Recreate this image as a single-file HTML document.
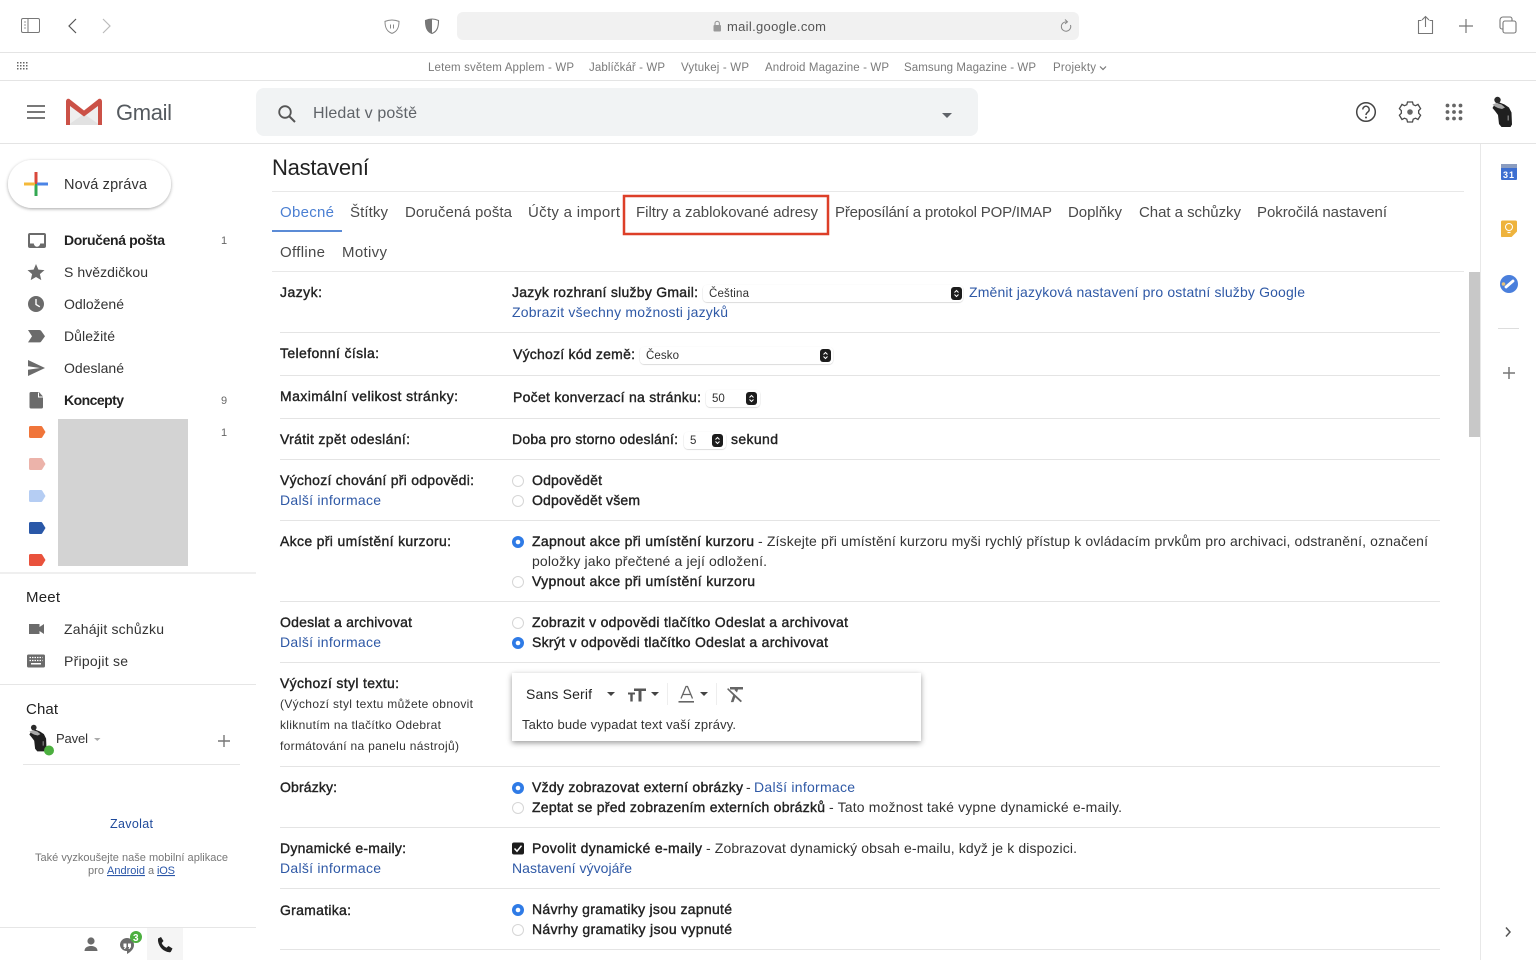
<!DOCTYPE html>
<html lang="cs"><head><meta charset="utf-8"><title>Gmail - Nastavení</title>
<style>
html,body{margin:0;padding:0;background:#fff;width:1536px;height:960px;overflow:hidden}
svg{display:block;filter:blur(.3px)}
text{font-family:"Liberation Sans",sans-serif;font-size:14px;fill:#333}
.b{font-weight:normal;fill:#222;stroke:#222;stroke-width:.38px}
.l{fill:#2f59a6}
.m{fill:#4a4a4a;font-size:15px}
.bm{font-size:11.5px;fill:#7a7a7a}
.sm{font-size:12px;fill:#333}
.sel{font-size:11.5px;fill:#333}
.cnt{font-size:11px;fill:#666}
.ic{fill:#6b6b6b}
</style></head><body>
<svg xmlns="http://www.w3.org/2000/svg" width="1536" height="960" viewBox="0 0 1536 960">
<defs>
<filter id="sh" x="-5%" y="-20%" width="110%" height="150%"><feDropShadow dx="0" dy="2" stdDeviation="3" flood-color="#000" flood-opacity=".4"/></filter>
<filter id="sh2" x="-5%" y="-20%" width="110%" height="150%"><feDropShadow dx="0" dy="1" stdDeviation="1.5" flood-color="#000" flood-opacity=".35"/></filter>
<filter id="sh3" x="-5%" y="-20%" width="110%" height="150%"><feDropShadow dx="0" dy=".5" stdDeviation=".6" flood-color="#000" flood-opacity=".25"/></filter>
<g id="av">
<circle cx="6" cy="3.500" r="3.200" fill="#2a2a2a"/>
<path d="M3 8l5-2 5 2 4.500 3 2.500 5 .5 12-1.500 2.500H10l-2.500-3-1-9-3-4-2.500-3z" fill="#1f1f1f"/>
<path d="M1 8l4-1.500 5 1.500 3.500 3-3 1.500-4-1-3-1.500z" fill="#a8a8a8"/>
<path d="M16 19h1.500v5H16z" fill="#777"/>
</g>
</defs>

<!-- Safari toolbar -->
<rect x="21.500" y="18.500" width="18" height="14" rx="1.500" fill="none" stroke="#777" stroke-width="1"/>
<path d="M28 18.500v14" stroke="#777" stroke-width="1"/>
<path d="M24 22h2M24 25h2M24 28h2" stroke="#999" stroke-width="1"/>
<path d="M76 19l-7 7 7 7" fill="none" stroke="#555" stroke-width="1.200"/>
<path d="M103 19l7 7-7 7" fill="none" stroke="#bbb" stroke-width="1.200"/>
<path d="M392 20c2 0 5 .6 7 1.400 0 5-1 10-7 12-6-2-7-7-7-12 2-.8 5-1.400 7-1.400z" fill="none" stroke="#888" stroke-width="1"/>
<path d="M390.500 24.500v4M393.500 24.500v4" stroke="#888" stroke-width="1"/>
<path d="M432 19c2.500 0 5 .8 6.500 1.500 0 6-1 11-6.500 13-5.500-2-6.500-7-6.500-13 1.500-.7 4-1.500 6.500-1.500z" fill="#fff" stroke="#777" stroke-width="1.100"/>
<path d="M432 19c-2.500 0-5 .8-6.500 1.500 0 6 1 11 6.500 13z" fill="#777"/>
<rect x="457" y="12" width="622" height="28" rx="6" fill="#f1f1f1"/>
<rect x="713.500" y="25" width="7.500" height="6.500" rx="1" fill="#999"/>
<path d="M715 25v-1.500a2.200 2.200 0 0 1 4.400 0V25" fill="none" stroke="#999" stroke-width="1.100"/>
<text x="727" y="31" style="font-size:13px;fill:#555" textLength="99">mail.google.com</text>
<path d="M1070.500 25a4.700 4.700 0 1 1-3.700-3.100" fill="none" stroke="#888" stroke-width="1"/>
<path d="M1065 19.500l2.500 2.400-2.500 2" fill="none" stroke="#888" stroke-width="1"/>
<path d="M1421.500 20.500h-3v13h14v-13h-3" fill="none" stroke="#777" stroke-width="1.100"/>
<path d="M1425.500 27V16.500M1422 20l3.500-3.500L1429 20" fill="none" stroke="#777" stroke-width="1.100"/>
<path d="M1466 19v14M1459 26h14" stroke="#777" stroke-width="1.200"/>
<rect x="1503" y="21" width="13" height="12" rx="2" fill="#fff" stroke="#777" stroke-width="1.100"/>
<path d="M1503 29h-1a2 2 0 0 1-2-2v-7a3 3 0 0 1 3-3h7a2 2 0 0 1 2 2v2" fill="none" stroke="#777" stroke-width="1.100"/>
<rect x="0" y="52" width="1536" height="1" fill="#e4e4e4"/>

<!-- Bookmarks -->
<g fill="#666"><path d="M17 62h1.500v1.500H17zM20 62h1.500v1.500H20zM23 62h1.500v1.500H23zM26 62h1.500v1.500H26zM17 65h1.500v1.500H17zM20 65h1.500v1.500H20zM23 65h1.500v1.500H23zM26 65h1.500v1.500H26zM17 68h1.500v1.500H17zM20 68h1.500v1.500H20zM23 68h1.500v1.500H23zM26 68h1.500v1.500H26z"/></g>
<text class="bm" x="428" y="71" textLength="146">Letem světem Applem - WP</text>
<text class="bm" x="589" y="71" textLength="76">Jablíčkář - WP</text>
<text class="bm" x="681" y="71" textLength="68">Vytukej - WP</text>
<text class="bm" x="765" y="71" textLength="124">Android Magazine - WP</text>
<text class="bm" x="904" y="71" textLength="132">Samsung Magazine - WP</text>
<text class="bm" x="1053" y="71" textLength="43">Projekty</text>
<path d="M1100 66.500l3 3 3-3" fill="none" stroke="#777" stroke-width="1.200"/>
<rect x="0" y="80" width="1536" height="1" fill="#e4e4e4"/>

<!-- Gmail header -->
<path d="M27 106h18M27 112h18M27 118h18" stroke="#666" stroke-width="1.800"/>
<path d="M68 104l16 11 16-11v21H68z" fill="#efefef"/>
<path d="M68 125l16-11 16 11z" fill="#e2e2e2"/>
<path d="M66 101.500C66 99 68.500 98 70 99.500l14 11 14-11c1.500-1.500 4-.5 4 2V125h-4v-19l-14 10.500-14-10.500V125h-4z" fill="#cb5147"/>
<text x="116" y="120" style="font-size:22px;fill:#555a5f" textLength="56">Gmail</text>
<rect x="256" y="88" width="722" height="48" rx="8" fill="#f1f3f4"/>
<circle cx="285" cy="112" r="5.800" fill="none" stroke="#555" stroke-width="1.800"/>
<path d="M289.500 116.500l5.500 5.500" stroke="#555" stroke-width="2"/>
<text x="313" y="118" style="font-size:16px;fill:#5f6368" textLength="104">Hledat v poště</text>
<path d="M942 113h10l-5 5z" fill="#5f6368"/>
<circle cx="1366" cy="112" r="9.300" fill="none" stroke="#444" stroke-width="1.500"/>
<path d="M1362.800 109.500a3.200 3.200 0 1 1 5 2.600c-1 .8-1.800 1.300-1.800 2.900" fill="none" stroke="#444" stroke-width="1.400"/>
<circle cx="1366" cy="117.500" r="1" fill="#444"/>
<path d="M1407.500 102h5l.7 2.700 2.300 1 2.500-1.300 2.600 4.300-2 2c.1.800.1 1.700 0 2.500l2 2-2.600 4.300-2.500-1.300-2.300 1-.7 2.800h-5l-.7-2.800-2.300-1-2.500 1.300-2.600-4.300 2-2c-.1-.8-.1-1.700 0-2.500l-2-2 2.600-4.300 2.500 1.300 2.300-1z" fill="none" stroke="#4a4a4a" stroke-width="1.300"/>
<circle cx="1410" cy="112" r="2.800" fill="#666"/>
<g fill="#666"><circle cx="1447.500" cy="105.500" r="1.900"/><circle cx="1454" cy="105.500" r="1.900"/><circle cx="1460.500" cy="105.500" r="1.900"/><circle cx="1447.500" cy="112" r="1.900"/><circle cx="1454" cy="112" r="1.900"/><circle cx="1460.500" cy="112" r="1.900"/><circle cx="1447.500" cy="118.500" r="1.900"/><circle cx="1454" cy="118.500" r="1.900"/><circle cx="1460.500" cy="118.500" r="1.900"/></g>
<use href="#av" transform="translate(1491.500 96.500)"/>
<rect x="0" y="143" width="1536" height="1" fill="#e4e4e4"/>

<!-- Compose -->
<rect x="8" y="160" width="163" height="48" rx="24" fill="#fff" filter="url(#sh2)"/>
<rect x="34.500" y="172" width="3" height="12" fill="#d9483b"/>
<rect x="34.500" y="184" width="3" height="12" fill="#34a853"/>
<rect x="24" y="182.500" width="11" height="3" fill="#f4b93a"/>
<rect x="37" y="182.500" width="11" height="3" fill="#4b84e6"/>
<text x="64" y="189" textLength="83" style="font-size:14.500px;fill:#333">Nová zpráva</text>

<!-- Sidebar nav -->
<path d="M30 233h14a2 2 0 0 1 2 2v11a2 2 0 0 1-2 2H30a2 2 0 0 1-2-2v-11a2 2 0 0 1 2-2z" class="ic"/>
<path d="M30 235h14v8.500h-3.800a3.200 3.200 0 0 1-6.400 0H30z" fill="#fff"/>
<text x="64" y="245" textLength="101" style="font-weight:bold;fill:#222">Doručená pošta</text>
<text class="cnt" x="221" y="244" textLength="5">1</text>
<path d="M36 264l2.400 5.600 6.100.5-4.600 4 1.400 6L36 277l-5.300 3.100 1.400-6-4.600-4 6.100-.5z" class="ic"/>
<text x="64" y="277" textLength="84">S hvězdičkou</text>
<circle cx="36" cy="304" r="8" class="ic"/>
<path d="M36 299v5.500l3.800 2.300" fill="none" stroke="#fff" stroke-width="1.400"/>
<text x="64" y="309" textLength="60">Odložené</text>
<path d="M28 330h11.500a2 2 0 0 1 1.600.8L45 336.200l-3.900 5.400a2 2 0 0 1-1.600.8H28l4-6.200z" class="ic"/>
<text x="64" y="341" textLength="51">Důležité</text>
<path d="M28 360l17 8-17 8v-6.200l12-1.800-12-1.800z" class="ic"/>
<text x="64" y="373" textLength="60">Odeslané</text>
<path d="M31 392h8l4 4.500V407a1.500 1.500 0 0 1-1.500 1.500h-10.500A1.500 1.500 0 0 1 29.500 407v-13.500A1.500 1.500 0 0 1 31 392z" class="ic"/>
<path d="M38.500 392.500v4.500h4.500" fill="none" stroke="#fff" stroke-width="1"/>
<text x="64" y="405" textLength="60" style="font-weight:bold;fill:#222">Koncepty</text>
<text class="cnt" x="221" y="404" textLength="6">9</text>
<path d="M30.500 426h10.500a1.500 1.500 0 0 1 1.200.6l3.300 5.400-3.300 5.400a1.500 1.500 0 0 1-1.200.6H30.500a1.500 1.500 0 0 1-1.500-1.500v-9a1.500 1.500 0 0 1 1.500-1.500z" fill="#f0753a"/>
<path d="M30.500 458h10.500a1.500 1.500 0 0 1 1.200.6l3.300 5.400-3.300 5.400a1.500 1.500 0 0 1-1.200.6H30.500a1.500 1.500 0 0 1-1.500-1.500v-9a1.500 1.500 0 0 1 1.500-1.500z" fill="#ecb3aa"/>
<path d="M30.500 490h10.500a1.500 1.500 0 0 1 1.200.6l3.300 5.400-3.300 5.400a1.500 1.500 0 0 1-1.200.6H30.500a1.500 1.500 0 0 1-1.500-1.500v-9a1.500 1.500 0 0 1 1.500-1.500z" fill="#b5cdf3"/>
<path d="M30.500 522h10.500a1.500 1.500 0 0 1 1.200.6l3.300 5.400-3.300 5.400a1.500 1.500 0 0 1-1.200.6H30.500a1.500 1.500 0 0 1-1.500-1.500v-9a1.500 1.500 0 0 1 1.500-1.500z" fill="#2a58a8"/>
<path d="M30.500 554h10.500a1.500 1.500 0 0 1 1.200.6l3.300 5.400-3.300 5.400a1.500 1.500 0 0 1-1.200.6H30.500a1.500 1.500 0 0 1-1.500-1.500v-9a1.500 1.500 0 0 1 1.500-1.500z" fill="#e9523c"/>
<rect x="58" y="419" width="130" height="147" fill="#d3d3d3"/>
<text class="cnt" x="221" y="436" textLength="5">1</text>
<rect x="0" y="572" width="256" height="2" fill="#efefef"/>

<!-- Meet -->
<text x="26" y="602" textLength="34" style="font-size:15px;fill:#222">Meet</text>
<path d="M29 624h10.500v3l4.500-3v10l-4.500-3v3H29z" class="ic"/>
<text x="64" y="634" textLength="100">Zahájit schůzku</text>
<rect x="27" y="654.500" width="18" height="13" rx="1.500" class="ic"/>
<path d="M29.500 657.500h13M29.500 660.500h13" stroke="#fff" stroke-width="1.300" stroke-dasharray="1.500 1"/>
<rect x="31" y="663" width="10" height="1.500" fill="#fff"/>
<text x="64" y="666" textLength="64">Připojit se</text>
<rect x="0" y="684" width="256" height="1" fill="#e6e6e6"/>

<!-- Chat -->
<text x="26" y="714" textLength="32" style="font-size:15px;fill:#222">Chat</text>
<use href="#av" transform="translate(28.500 724.500) scale(.88)"/>
<circle cx="49" cy="750.500" r="5" fill="#4caf3f"/>
<text x="56" y="743" textLength="32" style="font-size:13px;fill:#333">Pavel</text>
<path d="M94 738h6.500l-3.200 3z" fill="#aaa"/>
<path d="M224 735v12M218 741h12" stroke="#777" stroke-width="1.400"/>
<rect x="23" y="764" width="217" height="1" fill="#e6e6e6"/>
<text x="110" y="828" textLength="43" style="font-size:12.500px;fill:#1f4a9b">Zavolat</text>
<text x="35" y="861" textLength="193" style="font-size:11px;fill:#777">Také vyzkoušejte naše mobilní aplikace</text>
<text x="88" y="874" textLength="16" style="font-size:11px;fill:#777">pro</text>
<text x="107" y="874" textLength="38" style="font-size:11px;fill:#2a56a8;text-decoration:underline">Android</text>
<text x="148" y="874" textLength="5" style="font-size:11px;fill:#777">a</text>
<text x="157" y="874" textLength="18" style="font-size:11px;fill:#2a56a8;text-decoration:underline">iOS</text>
<rect x="0" y="927" width="256" height="1" fill="#e6e6e6"/>
<rect x="147" y="928" width="36" height="32" fill="#f5f5f5"/>
<circle cx="91" cy="941" r="3.600" class="ic"/>
<path d="M84.500 951c0-3.800 3.500-5 6.500-5s6.500 1.200 6.500 5z" class="ic"/>
<path d="M127 938a7 7 0 0 1 7 7c0 4-3.500 7-7 9v-3a6.500 6.500 0 0 1-7-6.500 7 7 0 0 1 7-6.500z" class="ic"/>
<path d="M123.500 943.500h3v3.500l-1.500 2h-1l.7-2h-1.200zM128 943.500h3v3.500l-1.500 2h-1l.7-2H128z" fill="#fff"/>
<circle cx="136" cy="937" r="6" fill="#4caf3f"/>
<text x="133" y="941" textLength="6" style="font-size:10px;fill:#fff;font-weight:bold">3</text>
<path d="M158 938.500l3-1.500 2.500 4-1.800 2c.8 2 2.500 3.800 4.800 4.800l2-1.800 4 2.500-1.500 3c-.3.600-1 .9-1.700.8-6-.8-10.500-5.300-11.300-11.300-.1-.7.200-2.100.0-2.500z" fill="#222"/>

<!-- Settings -->
<text x="272" y="175" textLength="97" style="font-size:22px;fill:#222">Nastavení</text>
<rect x="272" y="191" width="1192" height="1" fill="#e8e8e8"/>
<text x="280" y="217" textLength="54" style="font-size:15px;fill:#4b7fd2">Obecné</text>
<text class="m" x="350" y="217" textLength="38">Štítky</text>
<text class="m" x="405" y="217" textLength="107">Doručená pošta</text>
<text class="m" x="528" y="217" textLength="92">Účty a import</text>
<text class="m" x="636" y="217" textLength="182">Filtry a zablokované adresy</text>
<text class="m" x="835" y="217" textLength="217">Přeposílání a protokol POP/IMAP</text>
<text class="m" x="1068" y="217" textLength="54">Doplňky</text>
<text class="m" x="1139" y="217" textLength="102">Chat a schůzky</text>
<text class="m" x="1257" y="217" textLength="130">Pokročilá nastavení</text>
<rect x="272" y="230" width="70" height="2" fill="#5b8bd6"/>
<rect x="624" y="196" width="204" height="38" fill="none" stroke="#dd3f28" stroke-width="2.500"/>
<text class="m" x="280" y="257" textLength="45">Offline</text>
<text class="m" x="342" y="257" textLength="45">Motivy</text>
<rect x="272" y="271" width="1192" height="1" fill="#e8e8e8"/>

<!-- Row separators -->
<g fill="#e4e4e4">
<rect x="280" y="332" width="1160" height="1"/><rect x="280" y="375" width="1160" height="1"/>
<rect x="280" y="418" width="1160" height="1"/><rect x="280" y="459" width="1160" height="1"/>
<rect x="280" y="520" width="1160" height="1"/><rect x="280" y="601" width="1160" height="1"/>
<rect x="280" y="662" width="1160" height="1"/><rect x="280" y="766" width="1160" height="1"/>
<rect x="280" y="827" width="1160" height="1"/><rect x="280" y="888" width="1160" height="1"/>
<rect x="280" y="949" width="1160" height="1"/>
</g>

<!-- Jazyk -->
<text class="b" x="280" y="297" textLength="42">Jazyk:</text>
<text class="b" x="512" y="297" textLength="186">Jazyk rozhraní služby Gmail:</text>
<rect x="703" y="285" width="260" height="17" rx="4" fill="#fff" filter="url(#sh3)"/>
<text class="sel" x="709" y="297" textLength="40">Čeština</text>
<rect x="951" y="287" width="11" height="13" rx="3" fill="#1c1c1c"/>
<path d="M954.500 292.500l2-2 2 2M954.500 294.500l2 2 2-2" fill="none" stroke="#fff" stroke-width="1"/>
<text class="l" x="969" y="297" textLength="336">Změnit jazyková nastavení pro ostatní služby Google</text>
<text class="l" x="512" y="317" textLength="216">Zobrazit všechny možnosti jazyků</text>

<text class="b" x="280" y="358" textLength="99">Telefonní čísla:</text>
<text class="b" x="513" y="359" textLength="122">Výchozí kód země:</text>
<rect x="640" y="347" width="193" height="17" rx="4" fill="#fff" filter="url(#sh3)"/>
<text class="sel" x="646" y="359" textLength="33">Česko</text>
<rect x="820" y="349" width="11" height="13" rx="3" fill="#1c1c1c"/>
<path d="M823.500 354.500l2-2 2 2M823.500 356.500l2 2 2-2" fill="none" stroke="#fff" stroke-width="1"/>

<text class="b" x="280" y="401" textLength="178">Maximální velikost stránky:</text>
<text class="b" x="513" y="402" textLength="188">Počet konverzací na stránku:</text>
<rect x="706" y="390" width="54" height="17" rx="4" fill="#fff" filter="url(#sh3)"/>
<text class="sel" x="712" y="402">50</text>
<rect x="746" y="392" width="11" height="13" rx="3" fill="#1c1c1c"/>
<path d="M749.500 397.500l2-2 2 2M749.500 399.500l2 2 2-2" fill="none" stroke="#fff" stroke-width="1"/>

<text class="b" x="280" y="444" textLength="130">Vrátit zpět odeslání:</text>
<text class="b" x="512" y="444" textLength="166">Doba pro storno odeslání:</text>
<rect x="684" y="432" width="42" height="17" rx="4" fill="#fff" filter="url(#sh3)"/>
<text class="sel" x="690" y="444">5</text>
<rect x="712" y="434" width="11" height="13" rx="3" fill="#1c1c1c"/>
<path d="M715.500 439.500l2-2 2 2M715.500 441.500l2 2 2-2" fill="none" stroke="#fff" stroke-width="1"/>
<text class="b" x="731" y="444" textLength="47">sekund</text>

<!-- Výchozí chování -->
<text class="b" x="280" y="485" textLength="194">Výchozí chování při odpovědi:</text>
<text class="l" x="280" y="505" textLength="101">Další informace</text>
<circle cx="518" cy="481" r="5.500" fill="#fff" stroke="#d6d6d6"/>
<text class="b" x="532" y="485" textLength="70">Odpovědět</text>
<circle cx="518" cy="501" r="5.500" fill="#fff" stroke="#d6d6d6"/>
<text class="b" x="532" y="505" textLength="108">Odpovědět všem</text>

<!-- Akce -->
<text class="b" x="280" y="546" textLength="171">Akce při umístění kurzoru:</text>
<circle cx="518" cy="542" r="6" fill="#2f7be6"/><circle cx="518" cy="542" r="2.300" fill="#fff"/>
<text class="b" x="532" y="546" textLength="222">Zapnout akce při umístění kurzoru</text>
<text x="758" y="546" textLength="670">- Získejte při umístění kurzoru myši rychlý přístup k ovládacím prvkům pro archivaci, odstranění, označení</text>
<text x="532" y="566" textLength="235">položky jako přečtené a její odložení.</text>
<circle cx="518" cy="582" r="5.500" fill="#fff" stroke="#d6d6d6"/>
<text class="b" x="532" y="586" textLength="223">Vypnout akce při umístění kurzoru</text>

<!-- Odeslat a archivovat -->
<text class="b" x="280" y="627" textLength="132">Odeslat a archivovat</text>
<text class="l" x="280" y="647" textLength="101">Další informace</text>
<circle cx="518" cy="623" r="5.500" fill="#fff" stroke="#d6d6d6"/>
<text class="b" x="532" y="627" textLength="316">Zobrazit v odpovědi tlačítko Odeslat a archivovat</text>
<circle cx="518" cy="643" r="6" fill="#2f7be6"/><circle cx="518" cy="643" r="2.300" fill="#fff"/>
<text class="b" x="532" y="647" textLength="296">Skrýt v odpovědi tlačítko Odeslat a archivovat</text>

<!-- Výchozí styl textu -->
<text class="b" x="280" y="688" textLength="119">Výchozí styl textu:</text>
<text class="sm" x="280" y="708" textLength="193">(Výchozí styl textu můžete obnovit</text>
<text class="sm" x="280" y="729" textLength="161">kliknutím na tlačítko Odebrat</text>
<text class="sm" x="280" y="750" textLength="179">formátování na panelu nástrojů)</text>
<rect x="512" y="673" width="409" height="68" fill="#fff" filter="url(#sh)"/>
<text x="526" y="699" textLength="66" style="fill:#222">Sans Serif</text>
<path d="M607 692h8l-4 4z" fill="#444"/>
<path d="M634 688.500h12v2.500h-4.500v10.500h-3V691H634zM628 692.500h7v2h-2.300v7h-2.400v-7H628z" fill="#555"/>
<path d="M651 692h8l-4 4z" fill="#444"/>
<rect x="667" y="683" width="1" height="22" fill="#eee"/>
<path d="M681 698.500l5-12h1.500l5 12M682.700 694.500h8" fill="none" stroke="#666" stroke-width="1.300"/>
<rect x="678.500" y="701" width="15.500" height="1.600" fill="#666"/>
<path d="M700 692h8l-4 4z" fill="#444"/>
<rect x="716" y="683" width="1" height="22" fill="#eee"/>
<path d="M730 687h13v2.500h-5l-1 3-2.500-2.500 .4-.5H730zM728 688l14 13-1.300 1.300-5.500-5-1.700 4.800h-2.700l2.400-6.800-6-5.900z" fill="#666"/>
<text x="522" y="729" textLength="214" style="font-size:13px;fill:#333">Takto bude vypadat text vaší zprávy.</text>

<!-- Obrázky -->
<text class="b" x="280" y="792" textLength="57">Obrázky:</text>
<circle cx="518" cy="788" r="6" fill="#2f7be6"/><circle cx="518" cy="788" r="2.300" fill="#fff"/>
<text class="b" x="532" y="792" textLength="211">Vždy zobrazovat externí obrázky</text>
<text x="746" y="792" textLength="5">-</text>
<text class="l" x="754" y="792" textLength="101">Další informace</text>
<circle cx="518" cy="808" r="5.500" fill="#fff" stroke="#d6d6d6"/>
<text class="b" x="532" y="812" textLength="293">Zeptat se před zobrazením externích obrázků</text>
<text x="829" y="812" textLength="293">- Tato možnost také vypne dynamické e-maily.</text>

<!-- Dynamické -->
<text class="b" x="280" y="853" textLength="126">Dynamické e-maily:</text>
<text class="l" x="280" y="873" textLength="101">Další informace</text>
<rect x="512" y="842.500" width="12" height="12" rx="2" fill="#1c1c1c"/>
<path d="M514.500 848.500l2.500 2.700 4.500-5.500" fill="none" stroke="#fff" stroke-width="1.500"/>
<text class="b" x="532" y="853" textLength="170">Povolit dynamické e-maily</text>
<text x="706" y="853" textLength="371">- Zobrazovat dynamický obsah e-mailu, když je k dispozici.</text>
<text class="l" x="512" y="873" textLength="120">Nastavení vývojáře</text>

<!-- Gramatika -->
<text class="b" x="280" y="915" textLength="71">Gramatika:</text>
<circle cx="518" cy="910" r="6" fill="#2f7be6"/><circle cx="518" cy="910" r="2.300" fill="#fff"/>
<text class="b" x="532" y="914" textLength="200">Návrhy gramatiky jsou zapnuté</text>
<circle cx="518" cy="930" r="5.500" fill="#fff" stroke="#d6d6d6"/>
<text class="b" x="532" y="934" textLength="200">Návrhy gramatiky jsou vypnuté</text>

<!-- Scrollbar and right rail -->
<rect x="1469" y="272" width="11" height="165" fill="#c8c8c8"/>
<rect x="1480" y="144" width="1" height="816" fill="#e8e8e8"/>
<rect x="1501" y="164" width="16" height="16" rx="1" fill="#3d6fd1"/>
<rect x="1501" y="164" width="16" height="4" fill="#8a9cc0"/>
<text x="1503" y="178" textLength="11" style="font-size:9px;fill:#fff;font-weight:bold">31</text>
<path d="M1501 222a1.500 1.500 0 0 1 1.500-1.500h13a1.500 1.500 0 0 1 1.500 1.500v9.500l-5.500 5.500h-9a1 1 0 0 1-1.500-1z" fill="#eeb33d"/>
<circle cx="1509" cy="227" r="3.500" fill="none" stroke="#fff" stroke-width="1"/>
<path d="M1507.500 232.500h3" stroke="#fff" stroke-width="1.200"/>
<circle cx="1509" cy="284" r="9" fill="#4a7fdc"/>
<path d="M1506 287l7-6" stroke="#fff" stroke-width="2.800" stroke-linecap="round"/>
<circle cx="1503.500" cy="284" r="1.800" fill="#e6c27a"/>
<rect x="1498" y="328" width="21" height="1" fill="#ddd"/>
<path d="M1509 367v12M1503 373h12" stroke="#777" stroke-width="1.500"/>
<path d="M1506 927.500l4 4.500-4 4.500" fill="none" stroke="#555" stroke-width="1.500"/>
</svg>
</body></html>
